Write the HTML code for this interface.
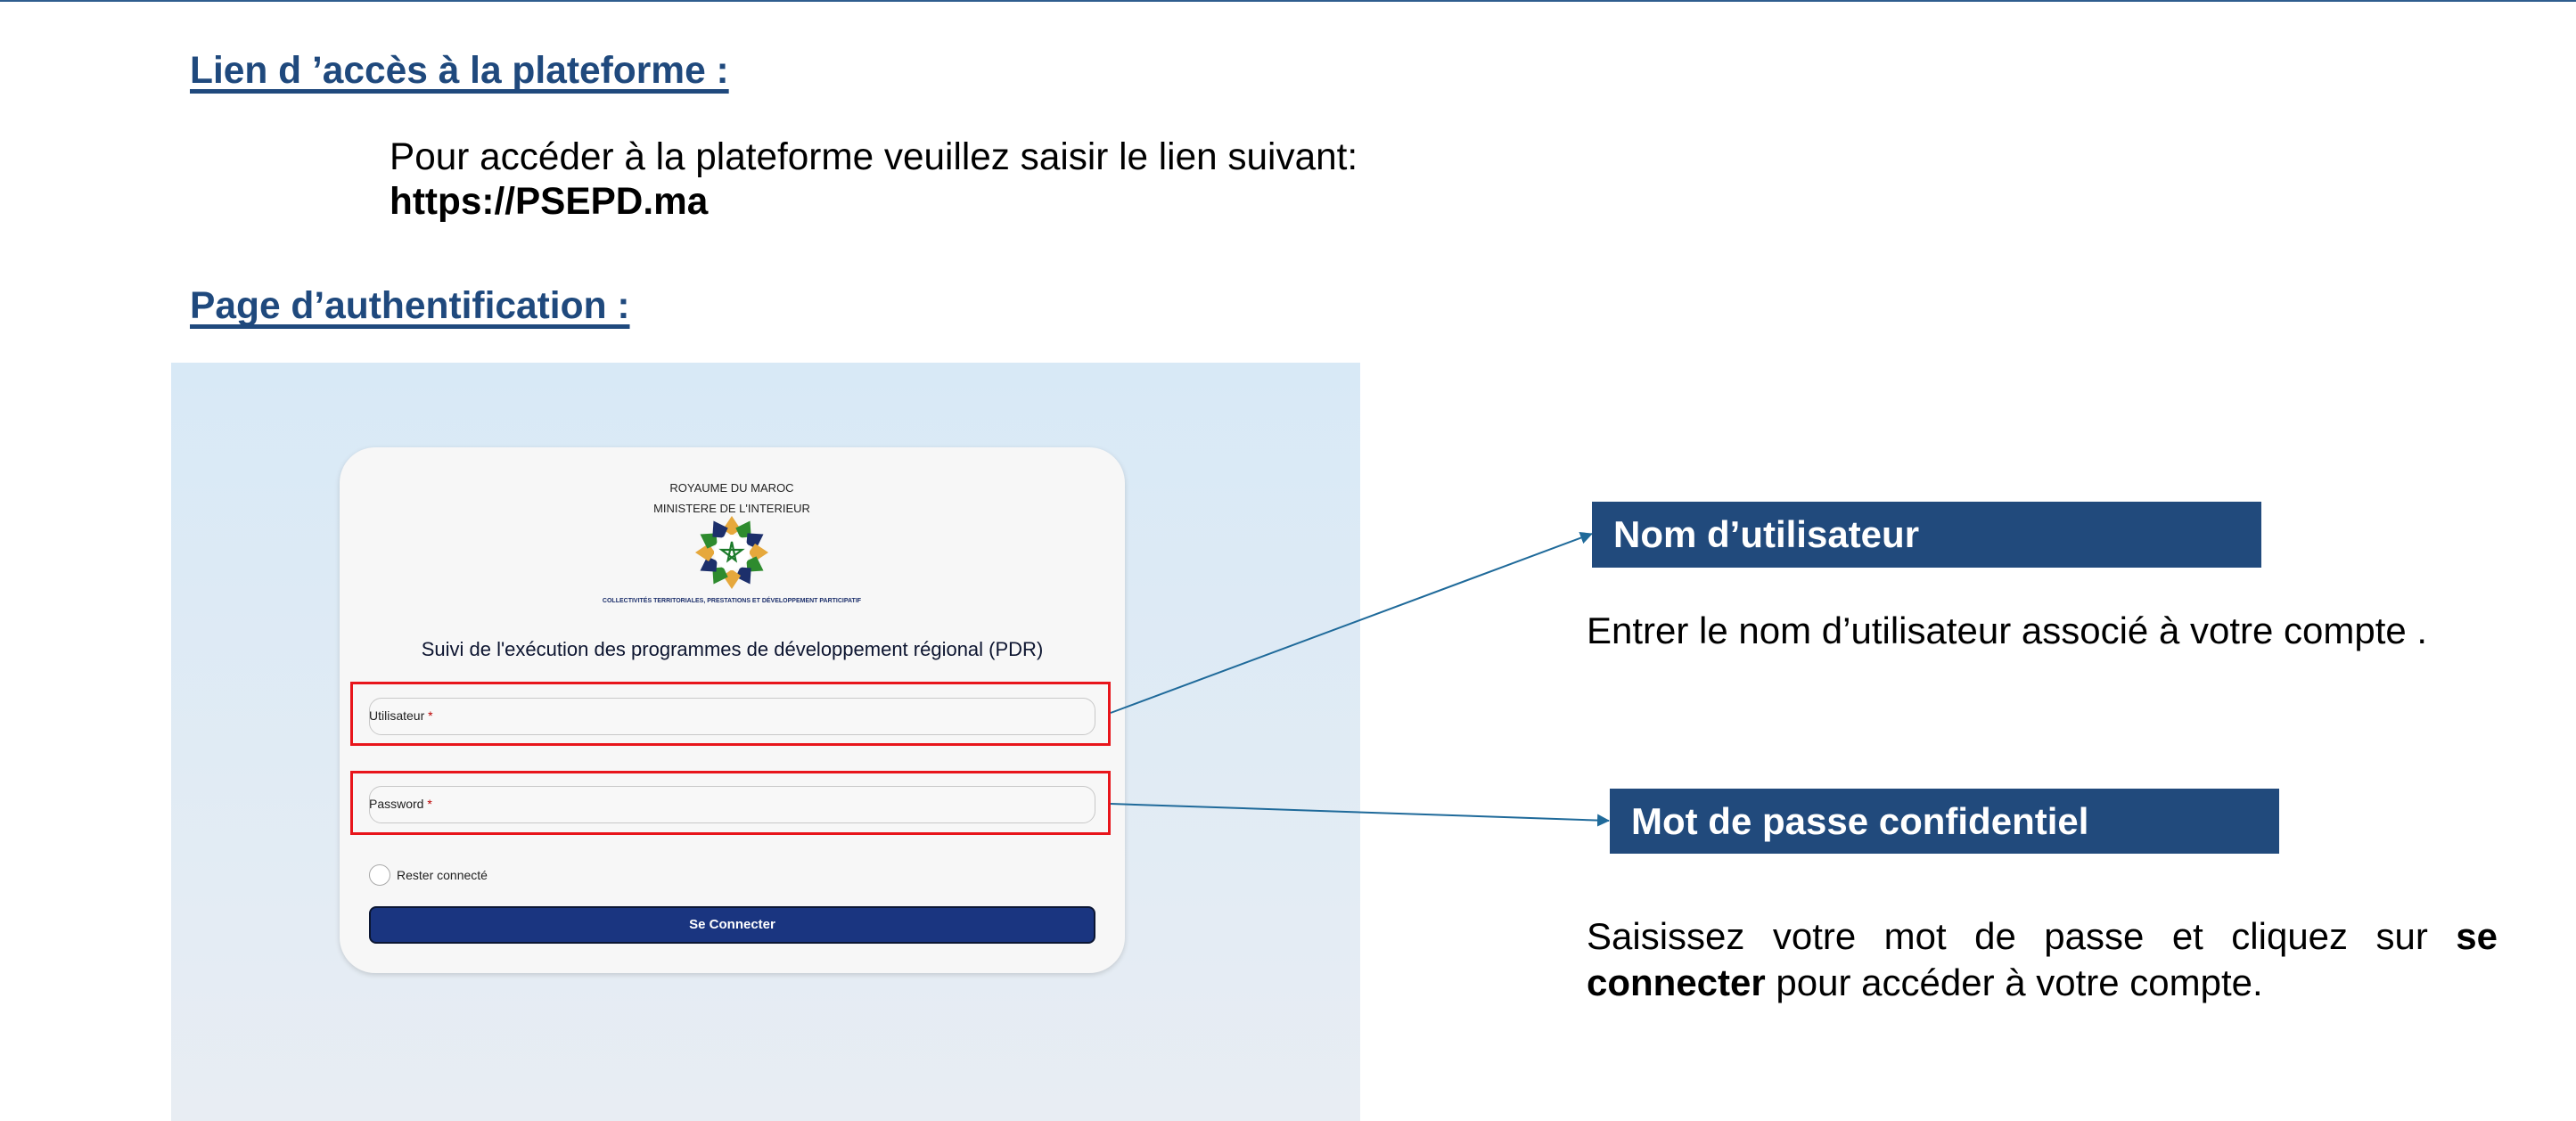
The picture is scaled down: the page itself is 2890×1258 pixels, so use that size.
<!DOCTYPE html>
<html><head><meta charset="utf-8"><style>
*{margin:0;padding:0;box-sizing:border-box}
body{width:2890px;height:1258px;position:relative;background:#fff;font-family:"Liberation Sans",Arial,sans-serif;overflow:hidden}
.a{position:absolute;white-space:nowrap}
.h{color:#1f497d;font-weight:bold;font-size:42.5px;text-decoration:underline;text-decoration-thickness:5px;text-underline-offset:7px;text-decoration-skip-ink:none}
.t{font-size:42px;color:#000}
.box{position:absolute;background:#214a7c;color:#fff;font-weight:bold;font-size:42px;padding-left:24px;display:flex;align-items:center}
</style></head><body>
<div class="a" style="left:0;top:0;width:2890px;height:2px;background:#2f5d8e"></div>
<div class="a h" style="left:213px;top:56px">Lien d ’accès à la plateforme :</div>
<div class="a t" style="left:437px;top:152px;font-size:42.3px">Pour accéder à la plateforme veuillez saisir le lien suivant:</div>
<div class="a t" style="left:437px;top:202px;font-weight:bold;font-size:42.3px">https://PSEPD.ma</div>
<div class="a h" style="left:213px;top:320px">Page d’authentification :</div>

<div class="a" style="left:192px;top:407px;width:1334px;height:851px;background:linear-gradient(#d8e9f6,#e8edf3)"></div>
<div class="a" style="left:381px;top:502px;width:881px;height:590px;background:#f7f7f7;border-radius:40px;box-shadow:0 2px 6px rgba(0,0,0,.15)"></div>
<div class="a" style="left:621px;top:540px;width:400px;text-align:center;font-size:13px;color:#222">ROYAUME DU MAROC</div>
<div class="a" style="left:621px;top:563px;width:400px;text-align:center;font-size:13px;color:#222">MINISTERE DE L'INTERIEUR</div>
<svg class="a" style="left:779px;top:578px" width="84" height="84" viewBox="-42 -42 84 84">
<g id="p">
<polygon points="0,-41 -10,-26 0,-19 10,-26" fill="#e6a83c"/>
<polygon points="0,-41 -10,-26 0,-19 10,-26" fill="#2e8b2e" transform="rotate(30)"/>
<polygon points="0,-41 -10,-26 0,-19 10,-26" fill="#1c2f6b" transform="rotate(60)"/>
</g>
<use href="#p" transform="rotate(90)"/><use href="#p" transform="rotate(180)"/><use href="#p" transform="rotate(270)"/>
<circle r="20" fill="#fff"/>
<polygon points="0,-15 4.4,6 -11.5,-6 11.5,-6 -4.4,6 0,-15" transform="translate(0,3)" fill="none" stroke="#1b7a2a" stroke-width="2.2"/>
</svg>
<div class="a" style="left:621px;top:671px;width:400px;text-align:center;font-size:7px;font-weight:bold;color:#1c2f6b">COLLECTIVITÉS TERRITORIALES, PRESTATIONS ET DÉVELOPPEMENT PARTICIPATIF</div>
<div class="a" style="left:381px;top:716px;width:881px;text-align:center;font-size:22px;color:#0d1530">Suivi de l'exécution des programmes de développement régional (PDR)</div>

<div class="a" style="left:393px;top:765px;width:853px;height:72px;border:3px solid #e8151b"></div>
<div class="a" style="left:414px;top:783px;width:815px;height:42px;border:1px solid #c8c8c8;border-radius:14px;background:#f8f8f8"></div>
<div class="a" style="left:414px;top:795px;font-size:14px;color:#222">Utilisateur <span style="color:#b00">*</span></div>
<div class="a" style="left:393px;top:865px;width:853px;height:72px;border:3px solid #e8151b"></div>
<div class="a" style="left:414px;top:882px;width:815px;height:42px;border:1px solid #c8c8c8;border-radius:14px;background:#f8f8f8"></div>
<div class="a" style="left:414px;top:894px;font-size:14px;color:#222">Password <span style="color:#b00">*</span></div>
<div class="a" style="left:414px;top:970px;width:24px;height:24px;border:1px solid #aaa;border-radius:50%;background:#fff"></div>
<div class="a" style="left:445px;top:974px;font-size:14px;color:#222">Rester connecté</div>
<div class="a" style="left:414px;top:1017px;width:815px;height:42px;background:#1a3580;border:2px solid #0b1633;border-radius:8px;color:#fff;font-weight:bold;font-size:15px;text-align:center;line-height:38px">Se Connecter</div>

<svg class="a" style="left:0;top:0" width="2890" height="1258">
<defs><marker id="m" markerWidth="14" markerHeight="14" refX="13" refY="7" orient="auto" markerUnits="userSpaceOnUse" viewBox="0 0 14 14"><path d="M0,0 L14,7 L0,14z" fill="#1f6a9a"/></marker></defs>
<line x1="1246" y1="800" x2="1786" y2="599" stroke="#1f6a9a" stroke-width="2" marker-end="url(#m)"/>
<line x1="1246" y1="902" x2="1805" y2="921" stroke="#1f6a9a" stroke-width="2" marker-end="url(#m)"/>
</svg>

<div class="box" style="left:1786px;top:563px;width:751px;height:74px">Nom d’utilisateur</div>
<div class="a t" style="left:1780px;top:684px">Entrer le nom d’utilisateur associé à votre compte .</div>
<div class="box" style="left:1806px;top:885px;width:751px;height:73px">Mot de passe confidentiel</div>
<div class="a t" style="left:1780px;top:1025px;width:1022px;white-space:normal;text-align:justify;line-height:52px">Saisissez votre mot de passe et cliquez sur <b>se connecter</b> pour accéder à votre compte.</div>
</body></html>
